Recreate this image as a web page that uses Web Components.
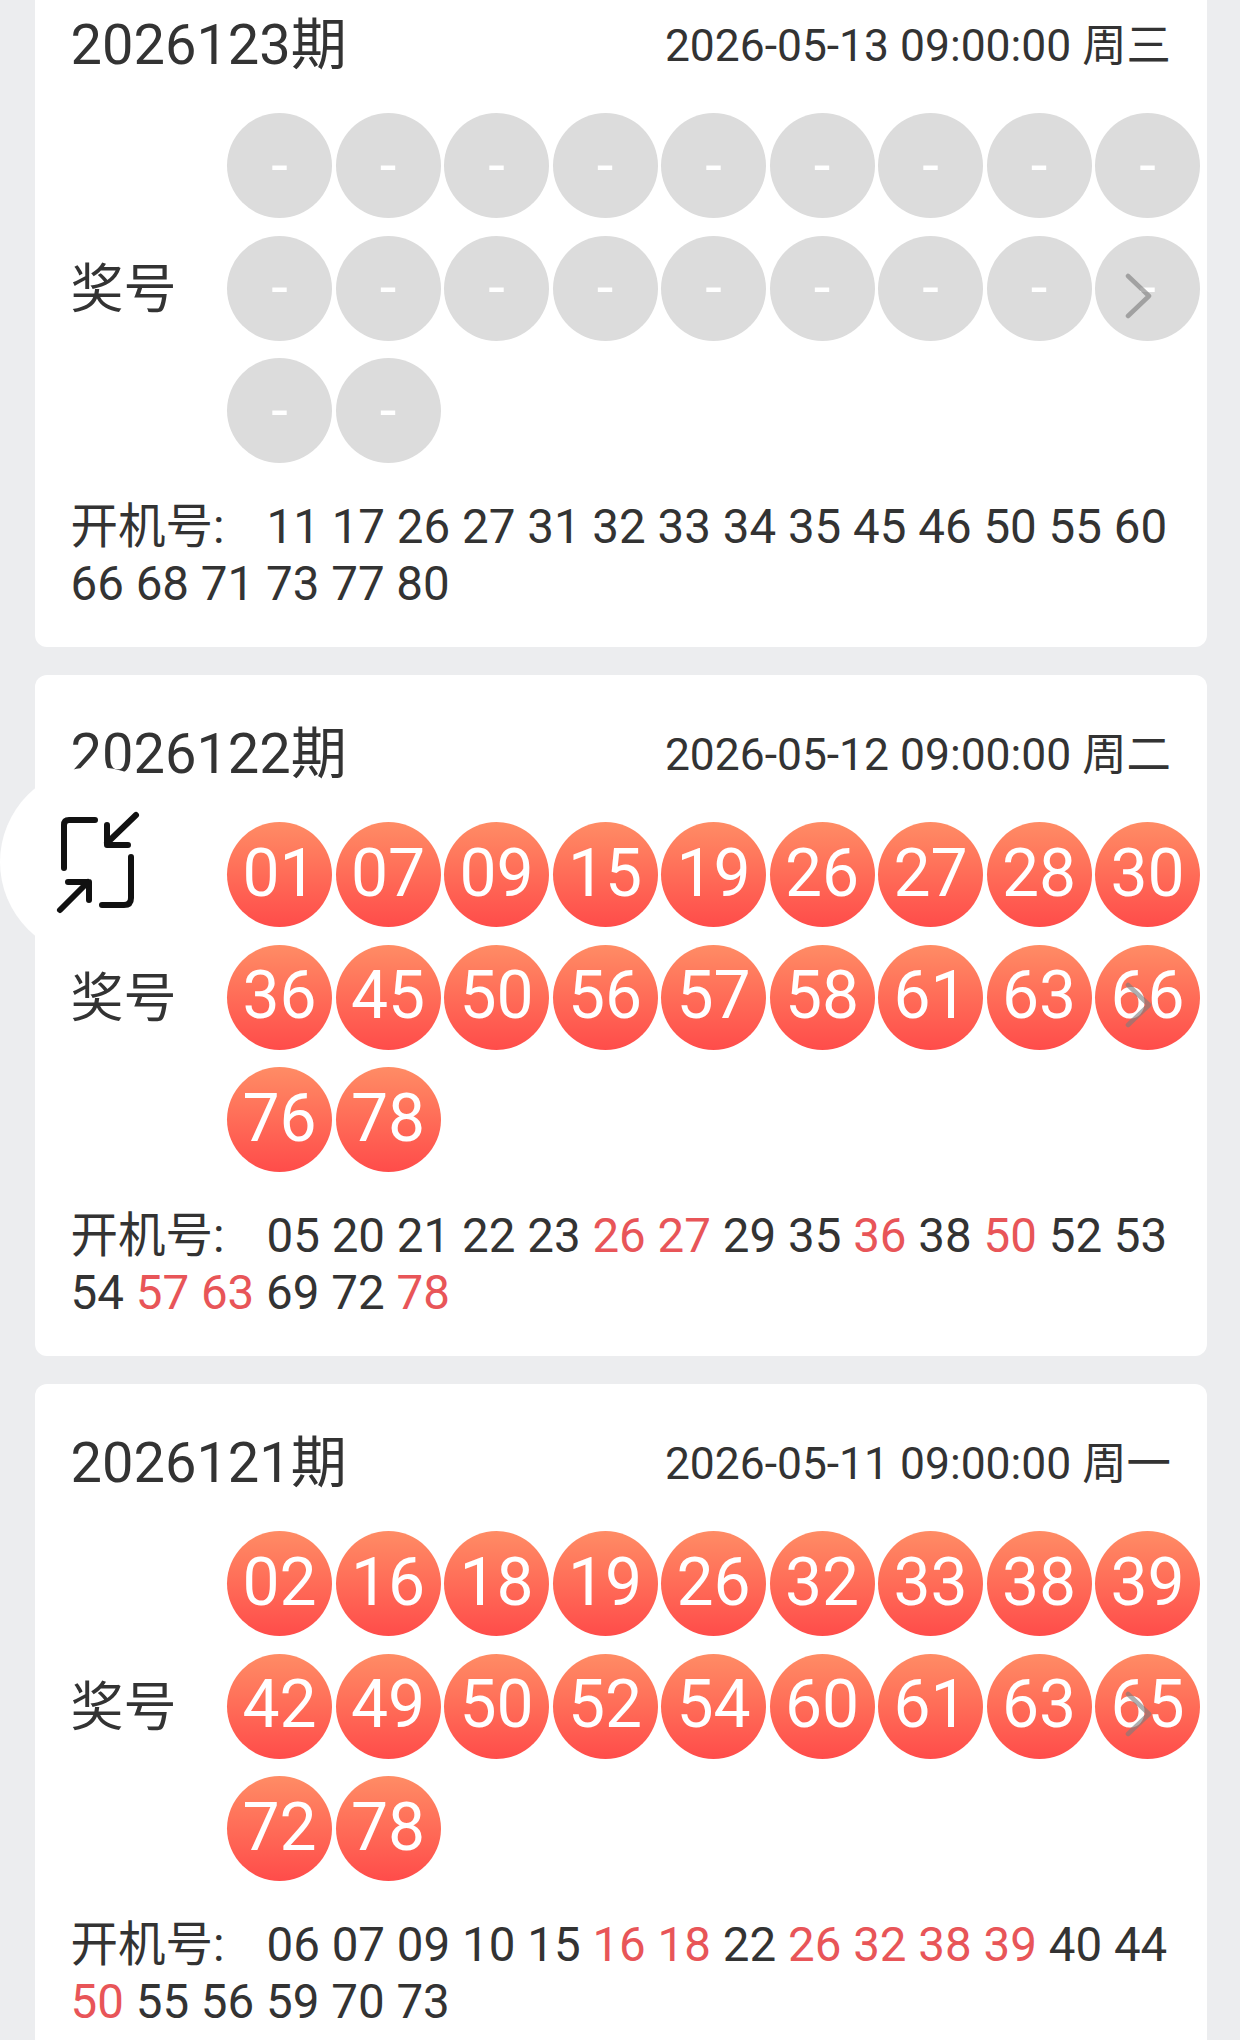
<!DOCTYPE html>
<html lang="zh">
<head>
<meta charset="utf-8">
<title>开奖结果</title>
<style>
  html, body {
    margin: 0;
    height: 100%;
    overflow: hidden;
    background: #ecedef;
  }
  body {
    position: relative;
    font-family: Roboto, "Noto Sans CJK SC", sans-serif;
    color: #333;
  }
</style>
</head>
<body>
<draw-list>
  <draw-card issue="2026123期" date="2026-05-13 09:00:00 周三"
    balls="- - - - - - - - - - - - - - - - - - - -"
    machine="11 17 26 27 31 32 33 34 35 45 46 50 55 60 66 68 71 73 77 80"></draw-card>
  <draw-card issue="2026122期" date="2026-05-12 09:00:00 周二"
    balls="01 07 09 15 19 26 27 28 30 36 45 50 56 57 58 61 63 66 76 78"
    machine="05 20 21 22 23 26 27 29 35 36 38 50 52 53 54 57 63 69 72 78"
    hits="26 27 36 50 57 63 78"></draw-card>
  <draw-card issue="2026121期" date="2026-05-11 09:00:00 周一"
    balls="02 16 18 19 26 32 33 38 39 42 49 50 52 54 60 61 63 65 72 78"
    machine="06 07 09 10 15 16 18 22 26 32 38 39 40 44 50 55 56 59 70 73"
    hits="16 18 26 32 38 39 50"></draw-card>
</draw-list>
<float-toggle></float-toggle>

<script>
class DrawList extends HTMLElement {
  constructor() {
    super();
    this.attachShadow({ mode: 'open' });
    this.shadowRoot.innerHTML = `
      <style>
        :host {
          display: flex;
          flex-direction: column;
          gap: 28px;
          margin: -34px 33px 0 35px;
        }
      </style>
      <slot></slot>
    `;
  }
}

class LotteryBall extends HTMLElement {
  constructor() {
    super();
    this.attachShadow({ mode: 'open' });
    this.shadowRoot.innerHTML = `
      <style>
        :host {
          display: flex;
          align-items: center;
          justify-content: center;
          width: 105px;
          height: 105px;
          border-radius: 50%;
          color: #fff;
          font-size: 66px;
          line-height: 1;
          padding-bottom: 2px;
          box-sizing: border-box;
          background: linear-gradient(180deg, #ff8c65, #ff4c4a);
        }
        :host([empty]) {
          background: #dcdcdc;
          font-size: 60px;
          padding-bottom: 0;
        }
      </style>
      <slot></slot>
    `;
  }
}

class DrawCard extends HTMLElement {
  constructor() {
    super();
    this.attachShadow({ mode: 'open' });
  }

  connectedCallback() {
    const balls = this.getAttribute('balls').split(' ');
    const hits = (this.getAttribute('hits') || '').split(' ');
    const ballHtml = balls.map((b) =>
      `<lottery-ball ${b === '-' ? 'empty' : ''}>${b}</lottery-ball>`).join('');
    const machineHtml = this.getAttribute('machine').split(' ').map((n) =>
      hits.includes(n) ? `<span class="hit">${n}</span>` : n).join(' ');

    this.shadowRoot.innerHTML = `
      <style>
        :host {
          display: block;
          position: relative;
          height: 681px;
          box-sizing: border-box;
          padding: 47px 7px 0 35.5px;
          background: #fff;
          border-radius: 12px;
        }
        header {
          display: flex;
          justify-content: space-between;
          align-items: center;
          height: 62px;
          padding-right: 29px;
        }
        .issue { font-size: 56px; margin-top: -10px; }
        .date { font-size: 44.4px; margin-top: -6px; }
        .prize {
          display: flex;
          align-items: center;
          margin-top: 38px;
        }
        .prize-label {
          width: 156.5px;
          flex: none;
          font-size: 53px;
          margin-top: -6px;
        }
        .balls {
          display: grid;
          grid-template-columns: repeat(9, 105px);
          column-gap: 3.5px;
          row-gap: 17.7px;
        }
        .machine {
          margin-top: 36px;
          padding-right: 22px;
          font-size: 47.5px;
          line-height: 57px;
        }
        .machine-label {
          display: inline-block;
          width: 196px;
        }
        .hit { color: #e85558; }
        .chevron {
          position: absolute;
          left: 1090px;
          top: 307px;
        }
      </style>
      <header>
        <span class="issue">${this.getAttribute('issue')}</span>
        <span class="date">${this.getAttribute('date')}</span>
      </header>
      <div class="prize">
        <span class="prize-label">奖号</span>
        <div class="balls">${ballHtml}</div>
      </div>
      <div class="machine"><span class="machine-label">开机号:</span>${machineHtml}</div>
      <svg class="chevron" width="28" height="46" viewBox="0 0 28 46" fill="none">
        <path d="M3 3 L24 23 L3 43" stroke="rgba(125,125,125,.62)" stroke-width="4.5" stroke-linecap="round" stroke-linejoin="round"/>
      </svg>
    `;
  }
}

class FloatToggle extends HTMLElement {
  constructor() {
    super();
    this.attachShadow({ mode: 'open' });
    this.shadowRoot.innerHTML = `
      <style>
        :host {
          display: block;
          position: absolute;
          left: 0;
          top: 767px;
          width: 190px;
          height: 190px;
          border-radius: 50%;
          background: #fff;
        }
      </style>
      <svg width="190" height="190" viewBox="0 0 190 190" fill="none" stroke="#111" stroke-width="6" stroke-linecap="round" stroke-linejoin="round">
        <path d="M95 53 H69 Q64 53 64 58 V101"/>
        <path d="M136 48 L107 76 M107 58 V78 H128"/>
        <path d="M131 90 V131 Q131 138 124 138 H102"/>
        <path d="M60 143 L88 115 M68 115 H89 V133"/>
      </svg>
    `;
  }
}

customElements.define('lottery-ball', LotteryBall);
customElements.define('draw-card', DrawCard);
customElements.define('draw-list', DrawList);
customElements.define('float-toggle', FloatToggle);
</script>
</body>
</html>
